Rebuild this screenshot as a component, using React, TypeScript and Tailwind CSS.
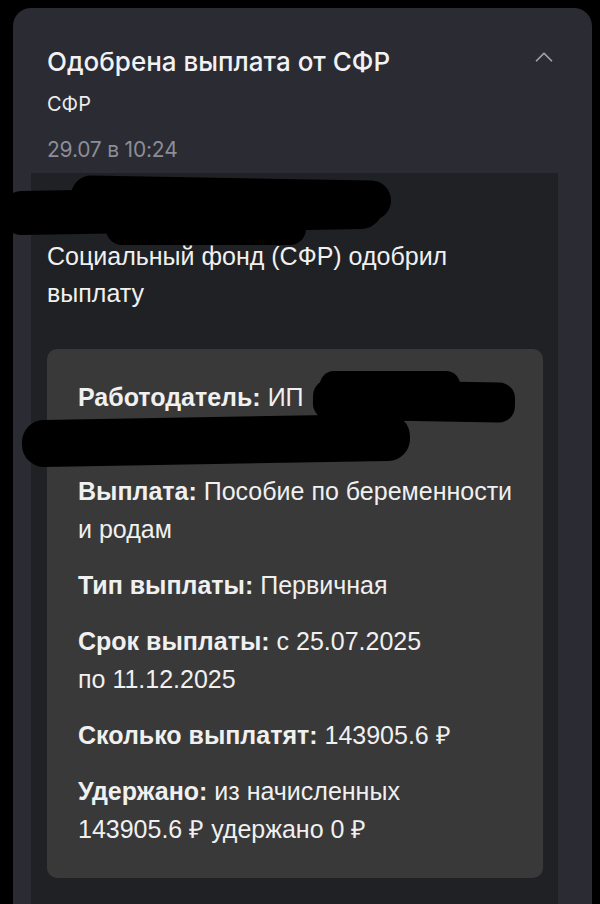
import { ChevronUp } from 'lucide-react';

const rows = [
  { label: 'Выплата:', value: 'Пособие по беременности и родам' },
  { label: 'Тип выплаты:', value: 'Первичная' },
  { label: 'Срок выплаты:', value: 'с 25.07.2025 по\u00a011.12.2025' },
  { label: 'Сколько выплатят:', value: '143905.6\u00a0₽' },
  { label: 'Удержано:', value: 'из начисленных 143905.6\u00a0₽ удержано 0\u00a0₽' },
];

export default function App() {
  return (
    <div className="min-h-screen bg-black pl-[13px] pr-[8px] pt-[8px] overflow-hidden">
      <div className="flex min-h-[896px] flex-col rounded-t-[18px] bg-[#2a2b33] font-['Inter',sans-serif]">
        {/* Header */}
        <div className="relative flex flex-col px-[34px] pt-[38px] pb-[9px]">
          <h1 className="text-[26px] leading-[32px] font-medium text-[#f2f2f4]">Одобрена выплата от СФР</h1>
          <p className="mt-[12px] text-[20px] leading-[28px] text-[#ececee]">СФР</p>
          <p className="mt-[18px] text-[21px] leading-[28px] tracking-[-0.2px] text-[#8c8d96]">29.07 в 10:24</p>
          <ChevronUp className="absolute right-[33px] top-[34px] text-[#a2a3aa]" size={30} strokeWidth={1.4} />
        </div>

        {/* Message body */}
        <div className="relative ml-[18px] mr-[34px] flex flex-1 flex-col bg-[#1f2125] px-[16px] pt-[65px] font-['Liberation_Sans',sans-serif] text-[#f0f0f0]">
          <div className="absolute left-[-31px] top-[15px] h-[44px] w-[383px] rounded-[22px] bg-black rotate-[-1deg]" />
          <div className="absolute left-[40px] top-[5px] h-[40px] w-[320px] rounded-[20px] bg-black rotate-[1deg]" />
          <div className="absolute left-[75px] top-[40px] h-[32px] w-[200px] rounded-[16px] bg-black" />

          <p className="text-[25px] leading-[37px]">Социальный фонд (СФР) одобрил выплату</p>

          <div className="relative mt-[37px] mr-[-1px] flex flex-col gap-[18px] rounded-[10px] bg-[#393939] pl-[31px] pr-[18px] pt-[29px] pb-[30px] text-[25px] leading-[38px]">
            <div className="absolute left-[273px] top-[22px] h-[30px] w-[140px] rounded-[14px] bg-black" />
            <div className="absolute left-[266px] top-[32px] h-[40px] w-[202px] rounded-[16px] bg-black rotate-[1deg]" />
            <div className="absolute left-[-25px] top-[68px] h-[47px] w-[388px] rounded-[22px] bg-black rotate-[-1deg]" />

            <p>
              <span className="font-bold">Работодатель:</span> ИП
              <br />
              &nbsp;
            </p>
            {rows.map((r) => (
              <p key={r.label}>
                <span className="font-bold">{r.label}</span> {r.value}
              </p>
            ))}
          </div>
        </div>
      </div>
    </div>
  );
}
